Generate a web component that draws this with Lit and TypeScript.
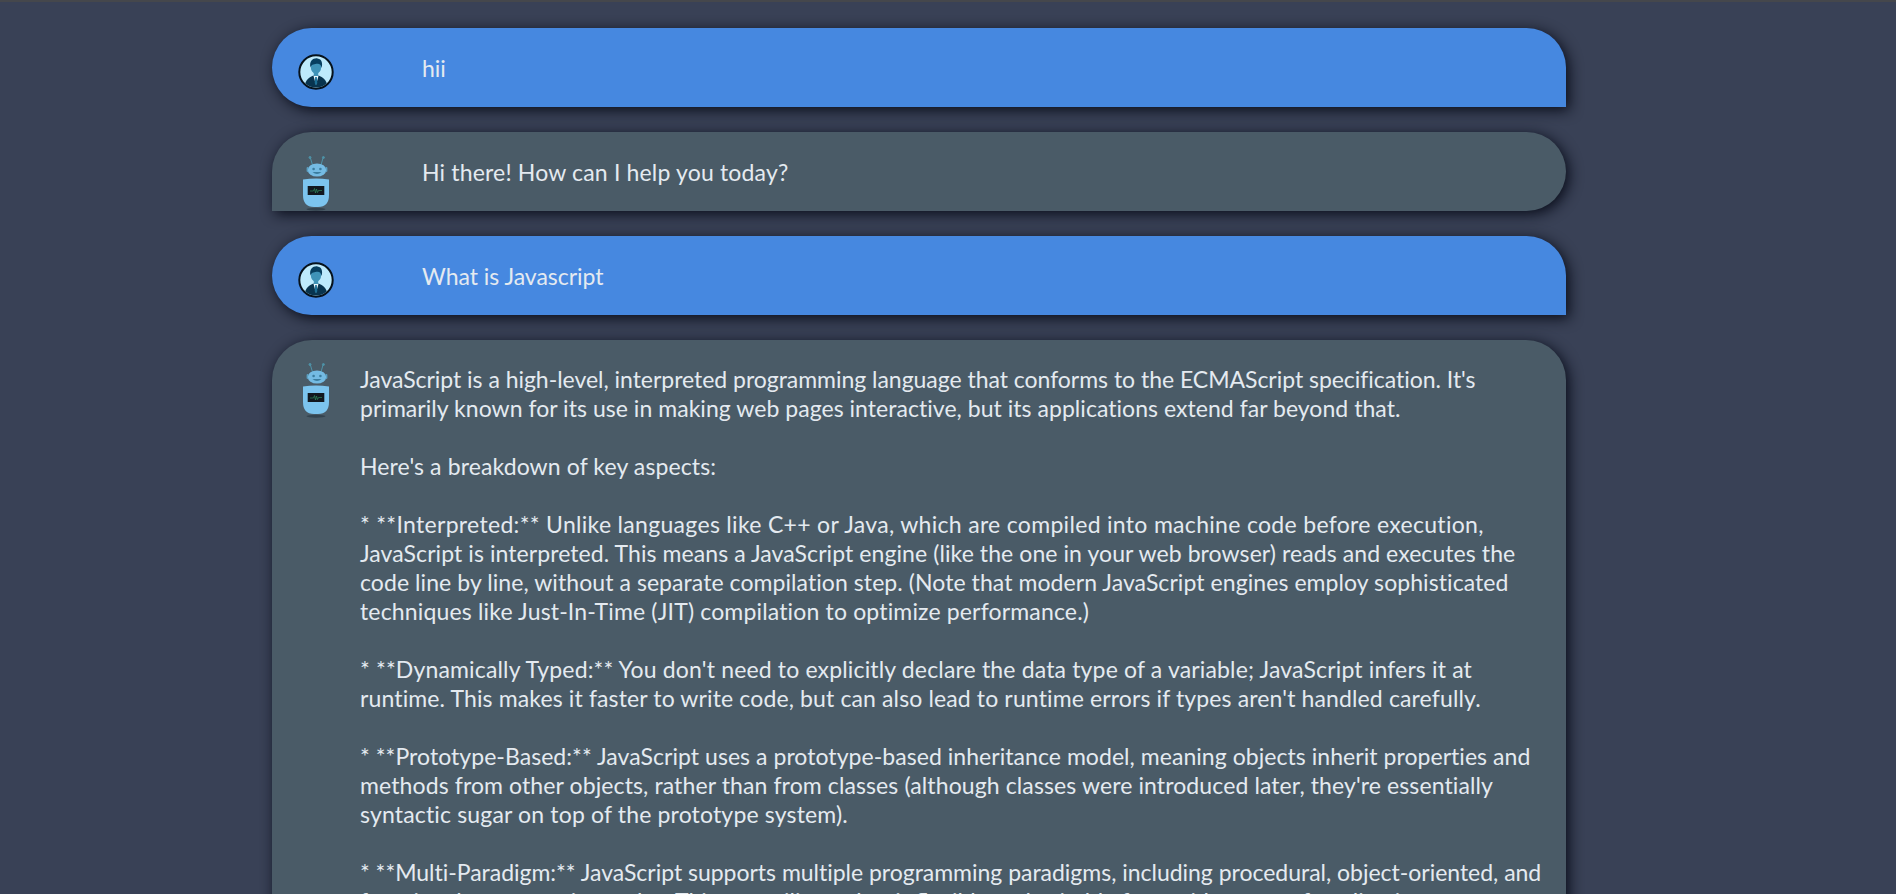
import { LitElement, html, css, svg } from "lit";
import { customElement } from "lit/decorators.js";

/* Each line carries the tracking that brings it to the reference's measured width. */
const LINES: [string, number][] = [
  ["JavaScript is a high-level, interpreted programming language that conforms to the ECMAScript specification. It's", -0.03],
  ["primarily known for its use in making web pages interactive, but its applications extend far beyond that.", 0.04],
  ["", 0],
  ["Here's a breakdown of key aspects:", 0.11],
  ["", 0],
  ["* **Interpreted:** Unlike languages like C++ or Java, which are compiled into machine code before execution,", 0.31],
  ["JavaScript is interpreted. This means a JavaScript engine (like the one in your web browser) reads and executes the", 0.08],
  ["code line by line, without a separate compilation step. (Note that modern JavaScript engines employ sophisticated", 0.07],
  ["techniques like Just-In-Time (JIT) compilation to optimize performance.)", 0.16],
  ["", 0],
  ["* **Dynamically Typed:** You don't need to explicitly declare the data type of a variable; JavaScript infers it at", 0.16],
  ["runtime. This makes it faster to write code, but can also lead to runtime errors if types aren't handled carefully.", 0.13],
  ["", 0],
  ["* **Prototype-Based:** JavaScript uses a prototype-based inheritance model, meaning objects inherit properties and", 0.05],
  ["methods from other objects, rather than from classes (although classes were introduced later, they're essentially", 0.11],
  ["syntactic sugar on top of the prototype system).", 0.16],
  ["", 0],
  ["* **Multi-Paradigm:** JavaScript supports multiple programming paradigms, including procedural, object-oriented, and", -0.02],
  ["functional programming styles. This versatility makes it flexible and suitable for a wide range of applications.", 0],
];

const userIcon = svg`<svg class="icon-user" viewBox="0 0 36 36" width="36" height="36" aria-hidden="true">
  <circle cx="18" cy="18" r="16.7" fill="#bdeafc" stroke="#06121c" stroke-width="2"/>
  <clipPath id="uc"><circle cx="18" cy="18" r="15.6"/></clipPath>
  <g clip-path="url(#uc)">
    <path d="M6 36 C6.5 26 11 23.5 15.4 21.5 L20.6 21.5 C25 23.5 29.5 26 30 36 Z" fill="#08344f"/>
    <path d="M15.4 21.5 L18 31 L20.6 21.5 Z" fill="#eaf8fe"/>
    <path d="M17.2 23 L18.8 23 L19.3 29 L18 31.5 L16.7 29 Z" fill="#1b6f96"/>
    <rect x="15.8" y="16" width="4.4" height="6" fill="#3f93b8"/>
    <ellipse cx="18" cy="13" rx="5.2" ry="6.6" fill="#3f93b8"/>
    <path d="M12.4 13.5 C11 6.5 15.5 3.8 19.5 4.4 C24 5 24.8 9.5 23.6 14 C23 11 21.5 9.6 19.5 9.8 C16.5 10.1 13.8 10 12.4 13.5 Z" fill="#073f60"/>
  </g>
</svg>`;

const botIcon = svg`<svg class="icon-bot" viewBox="0 0 30 55" width="30" height="55" aria-hidden="true">
  <g stroke="#4f93a8" stroke-width="1" fill="#4f93a8">
    <path d="M11.5 9 L9.4 2" fill="none"/><circle cx="9" cy="1.5" r="1"/>
    <path d="M20 9 L22 2" fill="none"/><circle cx="22.4" cy="1.5" r="1"/>
  </g>
  <rect x="5.6" y="11" width="2" height="5" rx="1" fill="#5b9fc0"/>
  <rect x="24.4" y="11" width="2" height="5" rx="1" fill="#5b9fc0"/>
  <ellipse cx="16" cy="14" rx="9.2" ry="6.6" fill="#74bbe3"/>
  <circle cx="12.6" cy="13" r="1.3" fill="#3b7d9f"/><circle cx="19.4" cy="13" r="1.3" fill="#3b7d9f"/>
  <path d="M11.5 16 Q16 20 20.5 16 Z" fill="#3b7d9f"/>
  <path d="M2 23.5 Q15 21.5 28 23.5 L28 39 Q28 51 17 51 L13 51 Q2 51 2 39 Z" fill="#7cc4ee"/>
  <rect x="6.7" y="30" width="16.6" height="9" fill="#12181f"/>
  <path d="M9 35 H12.5 L13.5 32.5 L14.5 37 L15.5 33 L16.5 36.5 L17.5 34.5 H21" fill="none" stroke="#2f8a5c" stroke-width=".7"/>
  <ellipse cx="15" cy="53.3" rx="9.5" ry="1.5" fill="#2e3d48" opacity=".8"/>
</svg>`;

@customElement("app-root")
export class AppRoot extends LitElement {
  static styles = css`
    :host {
      display: block;
      height: 894px;
      overflow: hidden;
      background: #394156;
      font-family: "Lato", "Noto Sans", sans-serif;
    }
    .topline { height: 2px; background: #45474c; }
    .list {
      width: 1294px;
      margin-left: 272px;
      padding-top: 26px;
      display: flex;
      flex-direction: column;
      gap: 25px;
    }
    .msg {
      display: flex;
      align-items: center;
      height: 79px;
      box-sizing: border-box;
      padding-left: 26px;
      box-shadow: 3px 3px 14px rgba(6, 10, 22, 0.95);
      color: #e4eaf0;
      font-size: 23px;
      letter-spacing: -0.03px;
    }
    .user { background: #4688e0; border-radius: 40px 40px 0 40px; }
    .bot { background: #4a5b67; border-radius: 40px 40px 40px 0; }
    .avatar { width: 36px; display: flex; justify-content: center; flex: none; }
    .user .avatar { margin-top: 8px; }
    .bot .avatar { align-self: flex-end; }
    .short { margin-left: 88px; }
    .track { letter-spacing: 0.17px; }
    .long {
      align-items: flex-start;
      height: auto;
      min-height: 700px;
      border-radius: 40px 40px 0 0;
      padding-top: 25px;
    }
    .long .avatar { align-self: flex-start; margin-top: -2px; }
    .lines { margin-left: 26px; line-height: 29px; white-space: pre; }
    .line { height: 29px; }
    svg { display: block; }
  `;

  render() {
    return html`
      <div class="topline"></div>
      <div class="list">
        <div class="msg user"><div class="avatar">${userIcon}</div><div class="short">hii</div></div>
        <div class="msg bot"><div class="avatar">${botIcon}</div><div class="short track">Hi there! How can I help you today?</div></div>
        <div class="msg user"><div class="avatar">${userIcon}</div><div class="short">What is Javascript</div></div>
        <div class="msg bot long">
          <div class="avatar">${botIcon}</div>
          <div class="lines">${LINES.map(
            ([text, tracking]) => html`<div class="line" style="letter-spacing:${tracking}px">${text}</div>`
          )}</div>
        </div>
      </div>
    `;
  }
}
